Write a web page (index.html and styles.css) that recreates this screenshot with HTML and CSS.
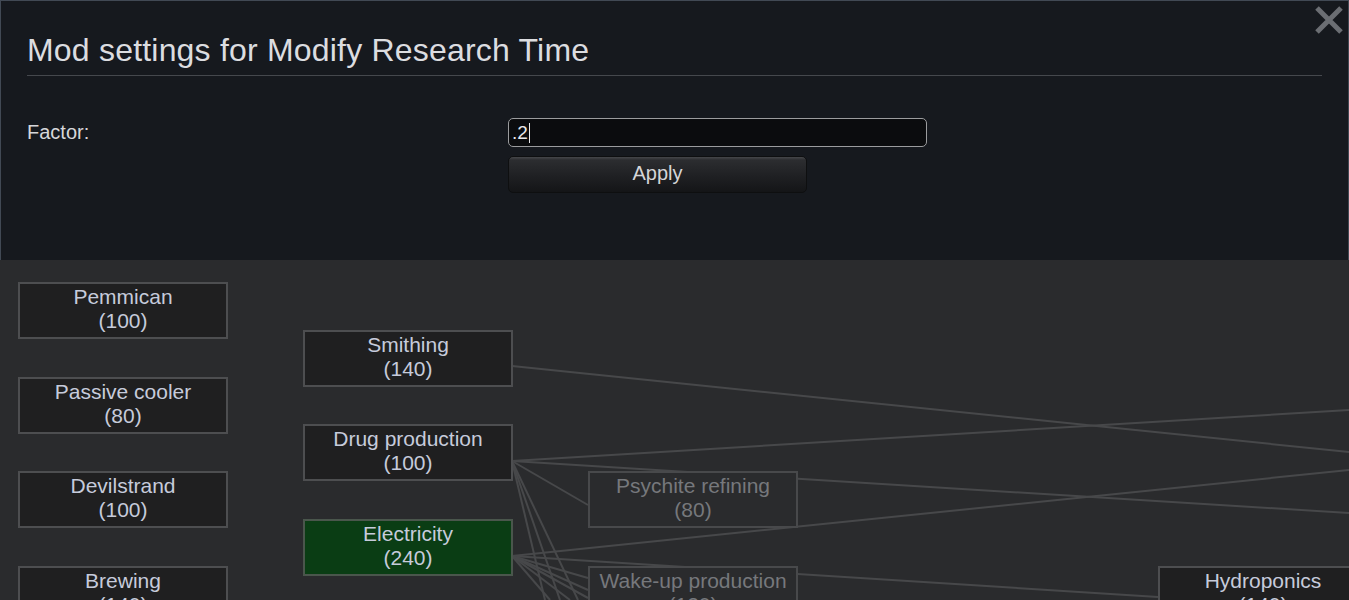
FILE: index.html
```html
<!DOCTYPE html>
<html>
<head>
<meta charset="utf-8">
<link rel="stylesheet" href="styles.css">
</head>
<body>
<div class="screen">
  <section class="dialog">
    <button class="close" aria-label="Close">
      <svg width="30" height="30" viewBox="0 0 30 30"><path d="M3 3 L27 27 M27 3 L3 27" stroke="#6b6e73" stroke-width="5" stroke-linecap="butt"/></svg>
    </button>
    <h1 class="title">Mod settings for Modify Research Time</h1>
    <div class="rule"></div>
    <div class="row">
      <label class="label">Factor:</label>
      <div class="controls">
        <div class="input"><span>.2</span><span class="caret"></span></div>
        <button class="apply">Apply</button>
      </div>
    </div>
  </section>
  <section class="tree">
    <svg class="links" width="1349" height="341" viewBox="0 260 1349 341">
      <g stroke="#47484a" stroke-width="2" fill="none">
        <line x1="512" y1="366" x2="1349" y2="452"/>
        <line x1="512" y1="461" x2="1349" y2="410"/>
        <line x1="512" y1="461" x2="1349" y2="513"/>
        <line x1="512" y1="461" x2="588" y2="505"/>
        <line x1="512" y1="556" x2="1349" y2="470"/>
        <line x1="512" y1="556" x2="1158" y2="597"/>
        <line x1="512" y1="461" x2="545" y2="600"/>
        <line x1="512" y1="461" x2="560" y2="600"/>
        <line x1="512" y1="461" x2="578" y2="600"/>
        <line x1="512" y1="556" x2="588" y2="578"/>
        <line x1="512" y1="556" x2="588" y2="590"/>
        <line x1="512" y1="556" x2="550" y2="600"/>
        <line x1="512" y1="556" x2="570" y2="600"/>
        <line x1="512" y1="556" x2="588" y2="598"/>
      </g>
    </svg>
    <div class="node" style="left:18px;top:22px">Pemmican<br>(100)</div>
    <div class="node" style="left:18px;top:117px">Passive cooler<br>(80)</div>
    <div class="node" style="left:18px;top:211px">Devilstrand<br>(100)</div>
    <div class="node" style="left:18px;top:306px">Brewing<br>(140)</div>
    <div class="node" style="left:303px;top:70px">Smithing<br>(140)</div>
    <div class="node" style="left:303px;top:164px">Drug production<br>(100)</div>
    <div class="node done" style="left:303px;top:259px">Electricity<br>(240)</div>
    <div class="node locked" style="left:588px;top:211px">Psychite refining<br>(80)</div>
    <div class="node locked" style="left:588px;top:306px">Wake-up production<br>(120)</div>
    <div class="node" style="left:1158px;top:306px">Hydroponics<br>(140)</div>
  </section>
</div>
</body>
</html>
```

FILE: styles.css
```css
* { box-sizing: border-box; }
html, body {
  margin: 0;
  padding: 0;
  width: 1349px;
  height: 600px;
  overflow: hidden;
  background: #2a2b2d;
  font-family: "Liberation Sans", Arial, sans-serif;
}
.screen {
  width: 1349px;
  height: 600px;
  display: flex;
  flex-direction: column;
}
.dialog {
  position: relative;
  height: 260px;
  flex: none;
  background: #16191e;
  border: 1px solid #414954;
  border-bottom: none;
  padding: 31px 26px 0 26px;
}
.close {
  position: absolute;
  top: 4px;
  right: 4px;
  width: 30px;
  height: 30px;
  padding: 0;
  border: none;
  background: none;
}
.close svg { display: block; }
.title {
  margin: 0;
  font-weight: normal;
  font-size: 32px;
  line-height: 36px;
  letter-spacing: 0.2px;
  color: #dcdde0;
}
.rule {
  margin-top: 7px;
  height: 1px;
  background: #45484d;
}
.row {
  display: flex;
  margin-top: 42px;
}
.label {
  width: 481px;
  font-size: 20px;
  line-height: 28px;
  color: #d6d7da;
}
.controls {
  display: flex;
  flex-direction: column;
  gap: 9px;
}
.input {
  width: 419px;
  height: 29px;
  background: #0b0c0e;
  border: 1px solid #9b9c9e;
  border-radius: 5px;
  display: flex;
  align-items: center;
  padding-left: 3px;
  font-size: 19px;
  color: #e8e8ea;
}
.caret {
  display: inline-block;
  width: 1px;
  height: 20px;
  background: #e8e8ea;
  margin-left: 1px;
}
.apply {
  width: 299px;
  height: 37px;
  border: 1px solid #0e0f10;
  border-radius: 5px;
  background: linear-gradient(#46474a 0px, #2c2d30 3px, #1f2023 55%, #141517 100%);
  color: #d4d5d8;
  font-family: "Liberation Sans", Arial, sans-serif;
  font-size: 20px;
  padding: 0 0 2px 0;
}
.tree {
  position: relative;
  flex: 1;
  background: #2a2b2d;
  overflow: hidden;
}
.links {
  position: absolute;
  left: 0;
  top: 0;
}
.node {
  position: absolute;
  width: 210px;
  height: 57px;
  background: #1f1f20;
  border: 2px solid #4d4e50;
  color: #c6cbdb;
  font-size: 21px;
  line-height: 24px;
  text-align: center;
  padding-top: 1px;
}
.node.done {
  background: #0a3d14;
  border-color: #4a564c;
}
.node.locked {
  background: #2a2b2d;
  border-color: #48494b;
  color: #76787c;
}
```
